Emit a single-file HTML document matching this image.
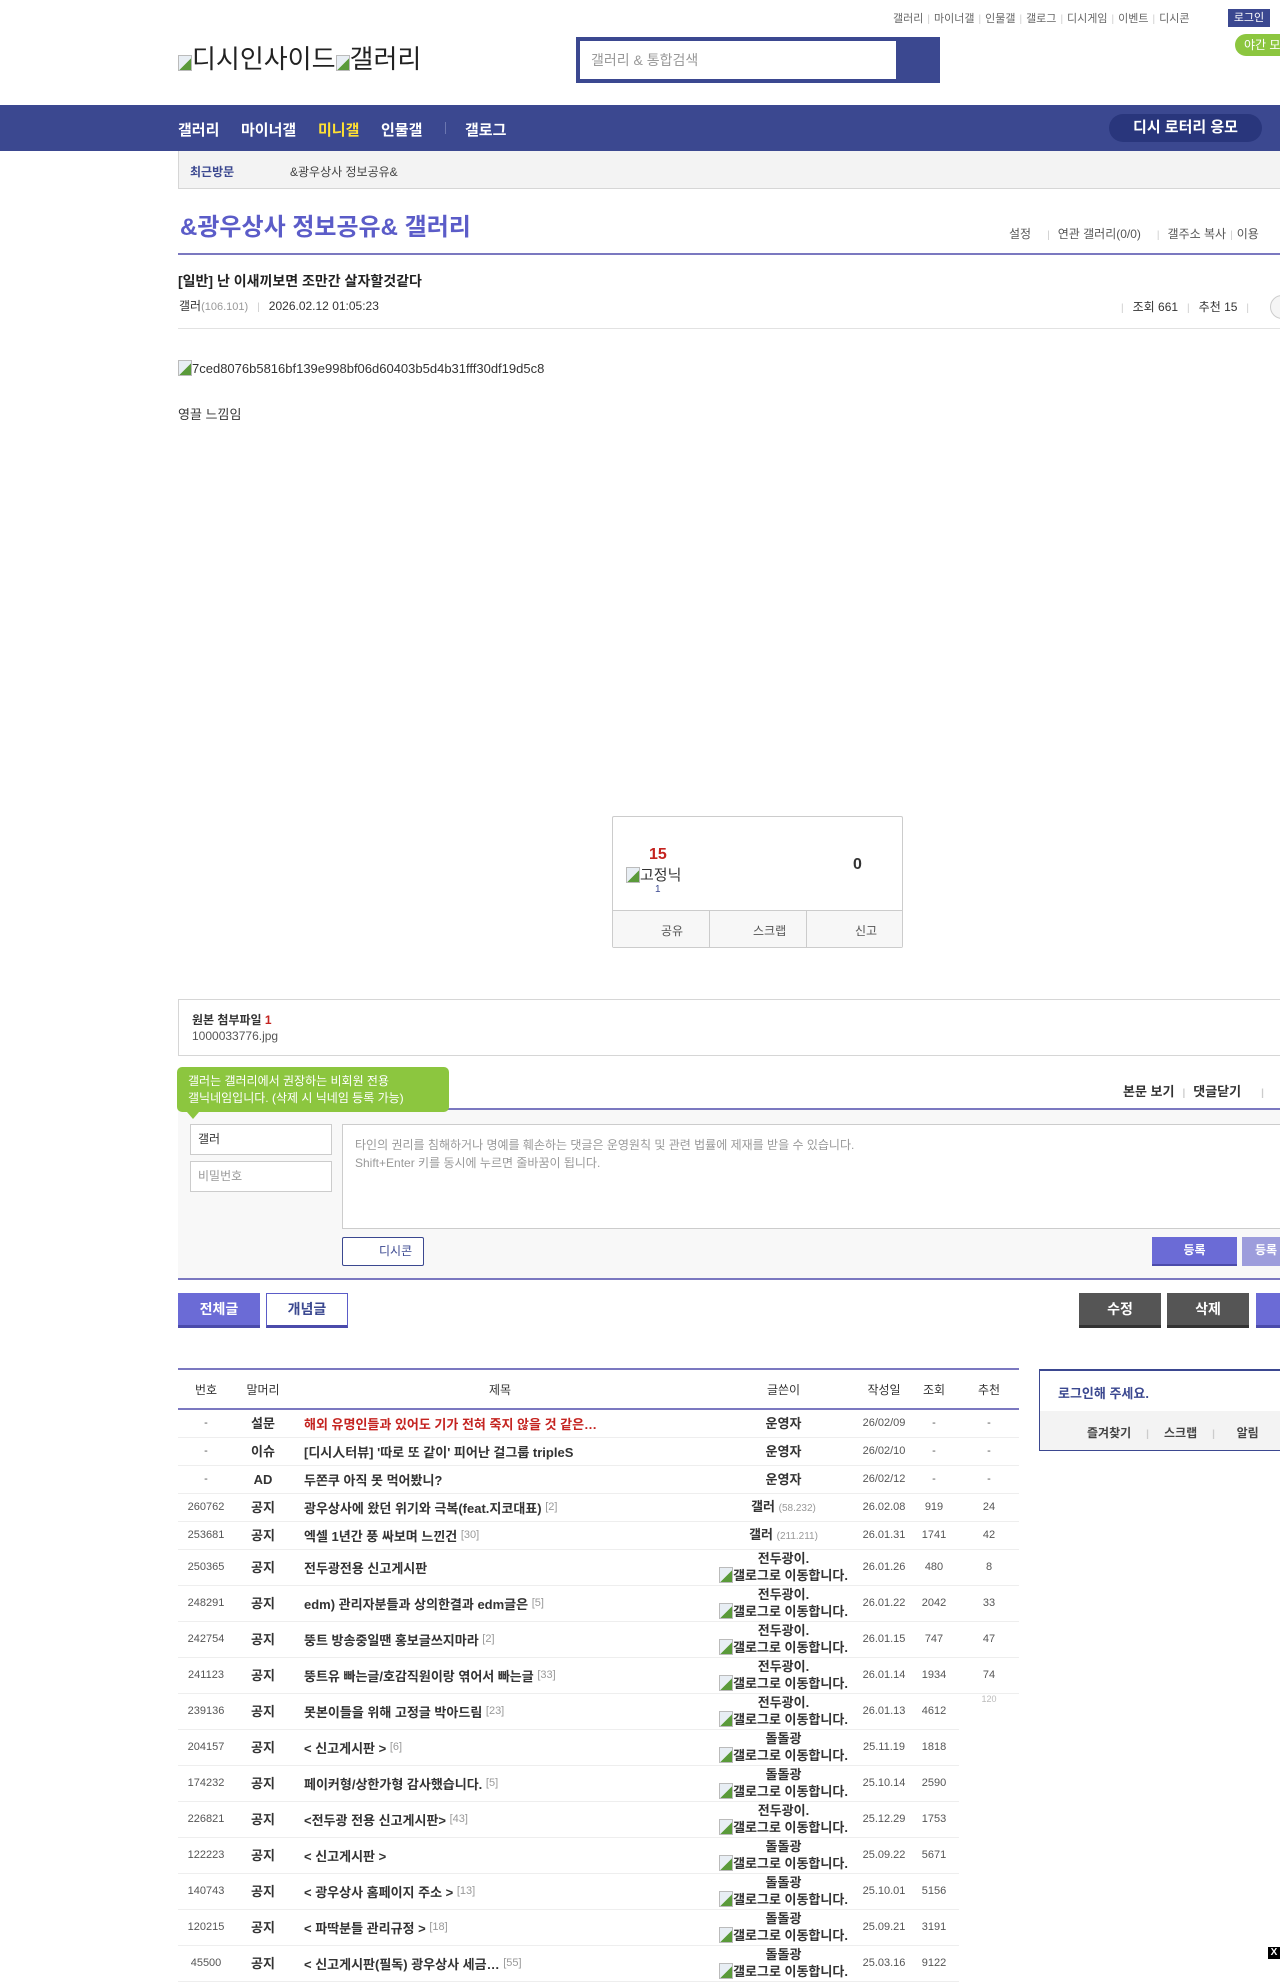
<!DOCTYPE html>
<html><head><meta charset="utf-8">
<style>
*{margin:0;padding:0;box-sizing:border-box}
body{width:1280px;height:1959px;position:relative;overflow:hidden;background:#fff;font-family:"Liberation Sans","Noto Sans CJK KR",sans-serif;color:#333;font-size:13px}
.a{position:absolute;white-space:nowrap}
.bi{display:inline-block;width:14px;height:16px;vertical-align:-3px;background:linear-gradient(135deg,#e8eef4 55%,#5a9a3a 56%);border:1px solid #bbb}
.top a{color:#666;font-size:11px;text-decoration:none}
.sep{color:#ccc;margin:0 4px;font-size:10px}
table{border-collapse:collapse;position:absolute;left:178px;top:1369px;width:841px}
td{font-size:12px;color:#444;text-align:center;padding:0}
tr.s td{height:28px;border-bottom:1px solid #eee}
tr.t td{height:36px;border-bottom:1px solid #eee}
td.tt{text-align:left;padding-left:12px;font-weight:bold;color:#333;font-size:13px}
td.nm{font-size:11px;color:#555}
td.w{font-weight:bold;font-size:13px;color:#333;line-height:17px}
.rc{color:#999;font-weight:normal;font-size:11px;vertical-align:3px}
.ip{color:#999;font-weight:normal;font-size:10px}
</style></head><body>

<div class="a top" style="left:893px;top:10px">
<a>갤러리</a><span class="sep">|</span><a>마이너갤</a><span class="sep">|</span><a>인물갤</a><span class="sep">|</span><a>갤로그</a><span class="sep">|</span><a>디시게임</a><span class="sep">|</span><a>이벤트</a><span class="sep">|</span><a>디시콘</a>
</div>
<div class="a" style="left:1228px;top:9px;width:42px;height:18px;background:#3b4890;color:#fff;font-size:11px;text-align:center;line-height:18px">로그인</div>
<div class="a" style="left:1235px;top:34px;width:60px;height:22px;background:#8cc63f;color:#fff;border-radius:11px;font-size:12px;line-height:22px;padding-left:9px">야간 모드</div>

<div class="a" style="left:178px;top:39px;font-size:26px;color:#222"><span class="bi"></span>디시인사이드<span class="bi"></span>갤러리</div>

<div class="a" style="left:576px;top:37px;width:364px;height:46px;background:#3b4890"></div>
<div class="a" style="left:580px;top:41px;width:316px;height:38px;background:#fff;color:#999;font-size:14px;line-height:38px;padding-left:11px">갤러리 &amp; 통합검색</div>

<div class="a" style="left:0;top:105px;width:1280px;height:46px;background:#3b4890"></div>
<div class="a" style="left:178px;top:119px;color:#fff;font-size:15px;font-weight:bold">갤러리</div>
<div class="a" style="left:241px;top:119px;color:#fff;font-size:15px;font-weight:bold">마이너갤</div>
<div class="a" style="left:318px;top:119px;color:#ffe033;font-size:15px;font-weight:bold">미니갤</div>
<div class="a" style="left:381px;top:119px;color:#fff;font-size:15px;font-weight:bold">인물갤</div>
<div class="a" style="left:445px;top:122px;width:1px;height:12px;background:#6b76b0"></div>
<div class="a" style="left:465px;top:119px;color:#fff;font-size:15px;font-weight:bold">갤로그</div>
<div class="a" style="left:1109px;top:114px;width:153px;height:28px;background:#29367c;border-radius:14px;color:#fff;font-size:15px;font-weight:bold;text-align:center;line-height:28px">디시 로터리 응모</div>

<div class="a" style="left:178px;top:151px;width:1110px;height:38px;background:#f3f3f3;border:1px solid #d6d6d6;border-top:none"></div>
<div class="a" style="left:190px;top:163px;color:#3b4890;font-size:12px;font-weight:bold">최근방문</div>
<div class="a" style="left:290px;top:163px;color:#444;font-size:12px">&amp;광우상사 정보공유&amp;</div>

<div class="a" style="left:180px;top:207px;color:#5b5cc8;font-size:24px;font-weight:bold">&amp;광우상사 정보공유&amp; 갤러리</div>
<div class="a" style="left:1009px;top:225px;color:#555;font-size:12px">설정<span class="sep" style="margin:0 8px 0 16px">|</span>연관 갤러리(0/0)<span class="sep" style="margin:0 8px 0 16px">|</span>갤주소 복사<span class="sep">|</span>이용</div>
<div class="a" style="left:178px;top:253px;width:1110px;height:2px;background:#7b78c0"></div>

<div class="a" style="left:178px;top:271px;color:#222;font-size:14px;font-weight:bold">[일반] 난 이새끼보면 조만간 살자할것같다</div>
<div class="a" style="left:179px;top:297px;font-size:12px;color:#333">갤러<span style="color:#999;font-size:11px">(106.101)</span><span class="sep" style="margin:0 9px">|</span>2026.02.12 01:05:23</div>
<div class="a" style="left:1121px;top:298px;font-size:12px;color:#333"><span class="sep" style="margin:0 9px 0 0">|</span>조회 661<span class="sep" style="margin:0 9px">|</span>추천 15<span class="sep" style="margin:0 9px">|</span></div>
<div class="a" style="left:1270px;top:295px;width:24px;height:24px;border:1px solid #ccc;border-radius:12px;background:#f5f5f5"></div>
<div class="a" style="left:178px;top:328px;width:1110px;height:1px;background:#e2e2e2"></div>

<div class="a" style="left:178px;top:360px;font-size:13px;color:#333"><span class="bi"></span>7ced8076b5816bf139e998bf06d60403b5d4b31fff30df19d5c8</div>
<div class="a" style="left:178px;top:404px;font-size:13px;color:#333">영끌 느낌임</div>

<div class="a" style="left:612px;top:816px;width:291px;height:132px;border:1px solid #ccc;border-radius:2px"></div>
<div class="a" style="left:613px;top:910px;width:289px;height:37px;background:#f7f7f7;border-top:1px solid #ccc"></div>
<div class="a" style="left:709px;top:911px;width:1px;height:36px;background:#ccc"></div>
<div class="a" style="left:806px;top:911px;width:1px;height:36px;background:#ccc"></div>
<div class="a" style="left:661px;top:922px;font-size:12px;color:#555">공유</div>
<div class="a" style="left:753px;top:922px;font-size:12px;color:#555">스크랩</div>
<div class="a" style="left:855px;top:922px;font-size:12px;color:#555">신고</div>
<div class="a" style="left:649px;top:846px;font-size:16px;font-weight:bold;color:#c4231f">15</div>
<div class="a" style="left:626px;top:864px;font-size:15px;color:#333"><span class="bi"></span>고정닉</div>
<div class="a" style="left:655px;top:884px;font-size:10px;color:#3b4890">1</div>
<div class="a" style="left:853px;top:856px;font-size:16px;font-weight:bold;color:#333">0</div>

<div class="a" style="left:178px;top:999px;width:1110px;height:57px;border:1px solid #d6d6d6"></div>
<div class="a" style="left:192px;top:1011px;font-size:12px;font-weight:bold;color:#333">원본 첨부파일 <span style="color:#c4231f">1</span></div>
<div class="a" style="left:192px;top:1029px;font-size:12px;color:#555">1000033776.jpg</div>

<div class="a" style="left:420px;top:1079px;font-size:15px;font-weight:bold;color:#333">순</div>
<div class="a" style="left:1123px;top:1081px;font-size:13px;font-weight:bold;color:#333">본문 보기<span class="sep" style="margin:0 8px">|</span>댓글닫기<span class="sep" style="margin:0 0 0 20px">|</span></div>
<div class="a" style="left:178px;top:1108px;width:1110px;height:2px;background:#7b78c0"></div>
<div class="a" style="left:178px;top:1110px;width:1110px;height:170px;background:#f8f8f8"></div>
<div class="a" style="left:177px;top:1067px;width:272px;height:45px;background:#8cc63f;border-radius:5px;color:#fff;font-size:12px;line-height:17px;padding:6px 11px">갤러는 갤러리에서 권장하는 비회원 전용<br>갤닉네임입니다. (삭제 시 닉네임 등록 가능)</div>
<div class="a" style="left:187px;top:1112px;width:0;height:0;border-left:6px solid transparent;border-right:6px solid transparent;border-top:7px solid #8cc63f"></div>
<div class="a" style="left:190px;top:1124px;width:142px;height:31px;background:#fff;border:1px solid #ccc;font-size:12px;color:#333;line-height:29px;padding-left:7px">갤러</div>
<div class="a" style="left:190px;top:1161px;width:142px;height:31px;background:#fff;border:1px solid #ccc;font-size:12px;color:#999;line-height:29px;padding-left:7px">비밀번호</div>
<div class="a" style="left:342px;top:1124px;width:950px;height:105px;background:#fff;border:1px solid #ccc;font-size:12px;color:#999;line-height:18px;padding:11px 12px">타인의 권리를 침해하거나 명예를 훼손하는 댓글은 운영원칙 및 관련 법률에 제재를 받을 수 있습니다.<br>Shift+Enter 키를 동시에 누르면 줄바꿈이 됩니다.</div>
<div class="a" style="left:342px;top:1237px;width:82px;height:29px;background:#fff;border:1px solid #3b4890;border-radius:2px;font-size:12px;color:#3b4890;line-height:27px;padding-left:36px">디시콘</div>
<div class="a" style="left:1152px;top:1237px;width:85px;height:29px;background:#6b6bd6;border-bottom:2px solid #4b4bab;color:#fff;font-size:12px;font-weight:bold;text-align:center;line-height:27px">등록</div>
<div class="a" style="left:1242px;top:1237px;width:85px;height:29px;background:#9d9ddc;color:#fff;font-size:12px;font-weight:bold;line-height:27px;padding-left:13px">등록</div>
<div class="a" style="left:178px;top:1278px;width:1110px;height:2px;background:#7b78c0"></div>

<div class="a" style="left:178px;top:1293px;width:82px;height:35px;background:#6b6bd6;border-bottom:3px solid #4b4bab;color:#fff;font-size:14px;font-weight:bold;text-align:center;line-height:33px">전체글</div>
<div class="a" style="left:266px;top:1293px;width:82px;height:35px;background:#fff;border:1px solid #5b5cc8;border-bottom:3px solid #4b4bab;color:#3b4890;font-size:14px;font-weight:bold;text-align:center;line-height:31px">개념글</div>
<div class="a" style="left:1079px;top:1293px;width:82px;height:35px;background:#555;border-bottom:3px solid #333;color:#fff;font-size:14px;font-weight:bold;text-align:center;line-height:33px">수정</div>
<div class="a" style="left:1167px;top:1293px;width:82px;height:35px;background:#555;border-bottom:3px solid #333;color:#fff;font-size:14px;font-weight:bold;text-align:center;line-height:33px">삭제</div>
<div class="a" style="left:1256px;top:1293px;width:82px;height:35px;background:#6b6bd6;border-bottom:3px solid #4b4bab"></div>

<div class="a" style="left:178px;top:1368px;width:841px;height:2px;background:#7b78c0"></div>
<table style="top:1370px">
<colgroup><col style="width:56px"><col style="width:58px"><col style="width:416px"><col style="width:151px"><col style="width:50px"><col style="width:50px"><col style="width:60px"></colgroup>
<tr><td style="height:39px;border-bottom:2px solid #7b78c0;font-size:12px;color:#333">번호</td><td style="border-bottom:2px solid #7b78c0;font-size:12px;color:#333">말머리</td><td style="border-bottom:2px solid #7b78c0;font-size:12px;color:#333">제목</td><td style="border-bottom:2px solid #7b78c0;font-size:12px;color:#333">글쓴이</td><td style="border-bottom:2px solid #7b78c0;font-size:12px;color:#333">작성일</td><td style="border-bottom:2px solid #7b78c0;font-size:12px;color:#333">조회</td><td style="border-bottom:2px solid #7b78c0;font-size:12px;color:#333">추천</td></tr>
<tr class="s"><td class="nm">-</td><td class="w">설문</td><td class="tt" style="color:#c4231f">해외 유명인들과 있어도 기가 전혀 죽지 않을 것 같은…</td><td class="w">운영자</td><td class="nm">26/02/09</td><td class="nm">-</td><td class="nm">-</td></tr>
<tr class="s"><td class="nm">-</td><td class="w">이슈</td><td class="tt">[디시人터뷰] '따로 또 같이' 피어난 걸그룹 tripleS</td><td class="w">운영자</td><td class="nm">26/02/10</td><td class="nm">-</td><td class="nm">-</td></tr>
<tr class="s"><td class="nm">-</td><td class="w">AD</td><td class="tt">두쫀쿠 아직 못 먹어봤니?</td><td class="w">운영자</td><td class="nm">26/02/12</td><td class="nm">-</td><td class="nm">-</td></tr>
<tr class="s"><td class="nm">260762</td><td class="w">공지</td><td class="tt">광우상사에 왔던 위기와 극복(feat.지코대표) <span class="rc">[2]</span></td><td class="w">갤러 <span class="ip">(58.232)</span></td><td class="nm">26.02.08</td><td class="nm">919</td><td class="nm">24</td></tr>
<tr class="s"><td class="nm">253681</td><td class="w">공지</td><td class="tt">엑셀 1년간 풍 싸보며 느낀건 <span class="rc">[30]</span></td><td class="w">갤러 <span class="ip">(211.211)</span></td><td class="nm">26.01.31</td><td class="nm">1741</td><td class="nm">42</td></tr>
<tr class="t"><td class="nm">250365</td><td class="w">공지</td><td class="tt">전두광전용 신고게시판</td><td class="w">전두광이.<br><span class="bi"></span>갤로그로 이동합니다.</td><td class="nm">26.01.26</td><td class="nm">480</td><td class="nm">8</td></tr>
<tr class="t"><td class="nm">248291</td><td class="w">공지</td><td class="tt">edm) 관리자분들과 상의한결과 edm글은 <span class="rc">[5]</span></td><td class="w">전두광이.<br><span class="bi"></span>갤로그로 이동합니다.</td><td class="nm">26.01.22</td><td class="nm">2042</td><td class="nm">33</td></tr>
<tr class="t"><td class="nm">242754</td><td class="w">공지</td><td class="tt">뚱트 방송중일땐 홍보글쓰지마라 <span class="rc">[2]</span></td><td class="w">전두광이.<br><span class="bi"></span>갤로그로 이동합니다.</td><td class="nm">26.01.15</td><td class="nm">747</td><td class="nm">47</td></tr>
<tr class="t"><td class="nm">241123</td><td class="w">공지</td><td class="tt">뚱트유 빠는글/호감직원이랑 엮어서 빠는글 <span class="rc">[33]</span></td><td class="w">전두광이.<br><span class="bi"></span>갤로그로 이동합니다.</td><td class="nm">26.01.14</td><td class="nm">1934</td><td class="nm">74</td></tr>
<tr class="t"><td class="nm">239136</td><td class="w">공지</td><td class="tt">못본이들을 위해 고정글 박아드림 <span class="rc">[23]</span></td><td class="w">전두광이.<br><span class="bi"></span>갤로그로 이동합니다.</td><td class="nm">26.01.13</td><td class="nm">4612</td><td class="nm" style="border-bottom:none;vertical-align:top;color:#bbb;font-size:9px">120</td></tr>
<tr class="t"><td class="nm">204157</td><td class="w">공지</td><td class="tt">&lt; 신고게시판 &gt; <span class="rc">[6]</span></td><td class="w">돌돌광<br><span class="bi"></span>갤로그로 이동합니다.</td><td class="nm">25.11.19</td><td class="nm">1818</td><td style="border-bottom:none"></td></tr>
<tr class="t"><td class="nm">174232</td><td class="w">공지</td><td class="tt">페이커형/상한가형 감사했습니다. <span class="rc">[5]</span></td><td class="w">돌돌광<br><span class="bi"></span>갤로그로 이동합니다.</td><td class="nm">25.10.14</td><td class="nm">2590</td><td style="border-bottom:none"></td></tr>
<tr class="t"><td class="nm">226821</td><td class="w">공지</td><td class="tt">&lt;전두광 전용 신고게시판&gt; <span class="rc">[43]</span></td><td class="w">전두광이.<br><span class="bi"></span>갤로그로 이동합니다.</td><td class="nm">25.12.29</td><td class="nm">1753</td><td style="border-bottom:none"></td></tr>
<tr class="t"><td class="nm">122223</td><td class="w">공지</td><td class="tt">&lt; 신고게시판 &gt;</td><td class="w">돌돌광<br><span class="bi"></span>갤로그로 이동합니다.</td><td class="nm">25.09.22</td><td class="nm">5671</td><td style="border-bottom:none"></td></tr>
<tr class="t"><td class="nm">140743</td><td class="w">공지</td><td class="tt">&lt; 광우상사 홈페이지 주소 &gt; <span class="rc">[13]</span></td><td class="w">돌돌광<br><span class="bi"></span>갤로그로 이동합니다.</td><td class="nm">25.10.01</td><td class="nm">5156</td><td style="border-bottom:none"></td></tr>
<tr class="t"><td class="nm">120215</td><td class="w">공지</td><td class="tt">&lt; 파딱분들 관리규정 &gt; <span class="rc">[18]</span></td><td class="w">돌돌광<br><span class="bi"></span>갤로그로 이동합니다.</td><td class="nm">25.09.21</td><td class="nm">3191</td><td style="border-bottom:none"></td></tr>
<tr class="t"><td class="nm">45500</td><td class="w">공지</td><td class="tt">&lt; 신고게시판(필독) 광우상사 세금… <span class="rc">[55]</span></td><td class="w">돌돌광<br><span class="bi"></span>갤로그로 이동합니다.</td><td class="nm">25.03.16</td><td class="nm">9122</td><td style="border-bottom:none"></td></tr>
</table>

<div class="a" style="left:1039px;top:1369px;width:260px;height:82px;border:1px solid #3b4890;border-top:2px solid #3b4890"></div>
<div class="a" style="left:1040px;top:1411px;width:250px;height:39px;background:#f3f3f3"></div>
<div class="a" style="left:1058px;top:1383px;font-size:13px;font-weight:bold;color:#3b4890">로그인해 주세요.</div>
<div class="a" style="left:1087px;top:1424px;font-size:12px;font-weight:bold;color:#444">즐겨찾기<span class="sep" style="margin:0 15px">|</span>스크랩<span class="sep" style="margin:0 15px">|</span>&nbsp;&nbsp;알림</div>

<div class="a" style="left:1268px;top:1947px;width:12px;height:12px;background:#000;color:#fff;font-size:10px;font-weight:bold;text-align:center;line-height:12px">X</div>
</body></html>
